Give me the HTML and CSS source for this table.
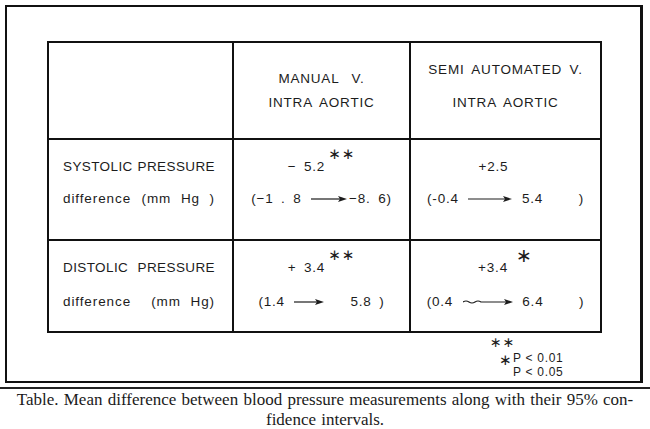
FILE: index.html
```html
<!DOCTYPE html>
<html>
<head>
<meta charset="utf-8">
<link rel="stylesheet" href="styles.css">
</head>
<body>
<div class="page">
  <div class="frame">
    <div class="grid">
      <div class="cell head"></div>
      <div class="cell head mid">
        <p class="hl1">MANUAL V.</p>
        <p>INTRA AORTIC</p>
      </div>
      <div class="cell head last">
        <p class="hl1 high">SEMI AUTOMATED V.</p>
        <p>INTRA AORTIC</p>
      </div>

      <div class="cell r1 label">
        <p class="split"><span>SYSTOLIC</span><span>PRESSURE</span></p>
        <p class="split lc"><span>difference</span><span>(mm Hg )</span></p>
      </div>
      <div class="cell r1 mid">
        <p>&minus; 5.2<span class="sup">&lowast;&lowast;</span></p>
        <p class="range">(&minus;1 . 8 <svg class="arrow" width="36" height="8" viewBox="0 0 36 8"><line x1="0" y1="4" x2="30" y2="4"/><path d="M27 1 L36 4 L27 7 L29 4 Z"/></svg>&minus;8. 6)</p>
      </div>
      <div class="cell r1 last">
        <p class="shift">+2.5</p>
        <p class="range">(-0.4 <svg class="arrow" width="44" height="8" viewBox="0 0 44 8"><line x1="0" y1="4" x2="38" y2="4"/><path d="M35 1 L44 4 L35 7 L37 4 Z"/></svg> 5.4 <span class="gap">)</span></p>
      </div>

      <div class="cell r2 label">
        <p class="split"><span>DISTOLIC</span><span>PRESSURE</span></p>
        <p class="split lc"><span>difference</span><span>(mm Hg)</span></p>
      </div>
      <div class="cell r2 mid">
        <p>+ 3.4<span class="sup">&lowast;&lowast;</span></p>
        <p class="range">(1.4 <svg class="arrow" width="30" height="8" viewBox="0 0 30 8"><line x1="0" y1="4" x2="24" y2="4"/><path d="M21 1 L30 4 L21 7 L23 4 Z"/></svg><span class="gap2">5.8</span> )</p>
      </div>
      <div class="cell r2 last">
        <p>+3.4<span class="sup big">&lowast;</span></p>
        <p class="range">(0.4 <svg class="arrow" width="50" height="8" viewBox="0 0 50 8"><path class="wave" d="M0 4 Q3 2 6 4 T12 4 T18 4 L44 4"/><path d="M41 1 L50 4 L41 7 L43 4 Z"/></svg> 6.4 <span class="gap">)</span></p>
      </div>
    </div>

    <div class="notes">
      <div class="n-stars">&lowast;&lowast;</div>
      <div class="n-line"><span class="n-star">&lowast;</span>P &lt; 0.01</div>
      <div class="n-line">P &lt; 0.05</div>
    </div>
  </div>

  <div class="rule"></div>
  <p class="caption">Table. Mean difference between blood pressure measurements along with their 95% con-<br>fidence intervals.</p>
</div>
</body>
</html>
```

FILE: styles.css
```css
* { box-sizing: border-box; }

html, body {
  margin: 0;
  padding: 0;
  background: #ffffff;
}

.page {
  width: 650px;
  height: 429px;
  padding-top: 5px;
  color: #1c1c1c;
}

p { margin: 0; }

.frame {
  width: 638px;
  height: 378px;
  margin-left: 5px;
  border: 2px solid #111;
  border-right-width: 3px;
  padding: 34px 0 0 40px;
  font-family: "Liberation Sans", Arial, sans-serif;
  font-size: 13.5px;
  letter-spacing: 0.8px;
  word-spacing: 3px;
}

.grid {
  width: 555px;
  height: 292px;
  border: 2px solid #111;
  display: grid;
  grid-template-columns: 185px 177px 1fr;
  grid-template-rows: 97px 101px 1fr;
}

.cell {
  display: flex;
  flex-direction: column;
  align-items: center;
  border-right: 2px solid #111;
  border-bottom: 2px solid #111;
}

.cell.last { border-right: none; }
.cell.r2 { border-bottom: none; }

.head { padding-top: 24px; line-height: 24px; }
.head .hl1 { word-spacing: 8px; }
.head .hl1.high { margin-top: -9px; margin-bottom: 9px; word-spacing: 3px; }

.r1 { padding-top: 11px; line-height: 32px; }
.r2 { padding-top: 10px; line-height: 34px; }

.label {
  align-items: stretch;
  padding-left: 14px;
  padding-right: 17px;
}

.split {
  display: flex;
  justify-content: space-between;
  letter-spacing: 0.4px;
  white-space: nowrap;
}

.split.lc { letter-spacing: 0.9px; word-spacing: 5px; }

.sup {
  font-family: "DejaVu Sans", sans-serif;
  font-size: 15px;
  letter-spacing: 1px;
  vertical-align: 12px;
  line-height: 0;
  margin-left: 3px;
}

.sup.big { font-size: 19px; margin-left: 8px; vertical-align: 10px; }

.shift { margin-right: 24px; }

.range { white-space: nowrap; }

.arrow {
  vertical-align: middle;
  margin: 0 2px;
}

.arrow line,
.arrow .wave {
  stroke: #1c1c1c;
  stroke-width: 1.2;
  fill: none;
}

.arrow path { fill: #1c1c1c; }
.arrow path.wave { fill: none; }

.gap { margin-left: 28px; }
.gap2 { margin-left: 24px; }

.notes {
  margin-left: 443px;
  margin-top: 1px;
  font-size: 12px;
  letter-spacing: 0.7px;
  word-spacing: 0;
}

.n-stars {
  font-family: "DejaVu Sans", sans-serif;
  font-size: 14px;
  line-height: 17px;
  letter-spacing: 1px;
}

.n-line {
  line-height: 14px;
  padding-left: 23px;
  position: relative;
}

.n-star {
  position: absolute;
  left: 9px;
  top: 2px;
  font-family: "DejaVu Sans", sans-serif;
  font-size: 15px;
  letter-spacing: 0;
}

.rule {
  margin-top: 4px;
  height: 2px;
  background: #222;
}

.caption {
  margin: 1px 0 0;
  font-family: "Liberation Serif", "Times New Roman", serif;
  font-size: 17px;
  word-spacing: 1px;
  line-height: 20px;
  text-align: center;
  color: #1a1a1a;
}
```
